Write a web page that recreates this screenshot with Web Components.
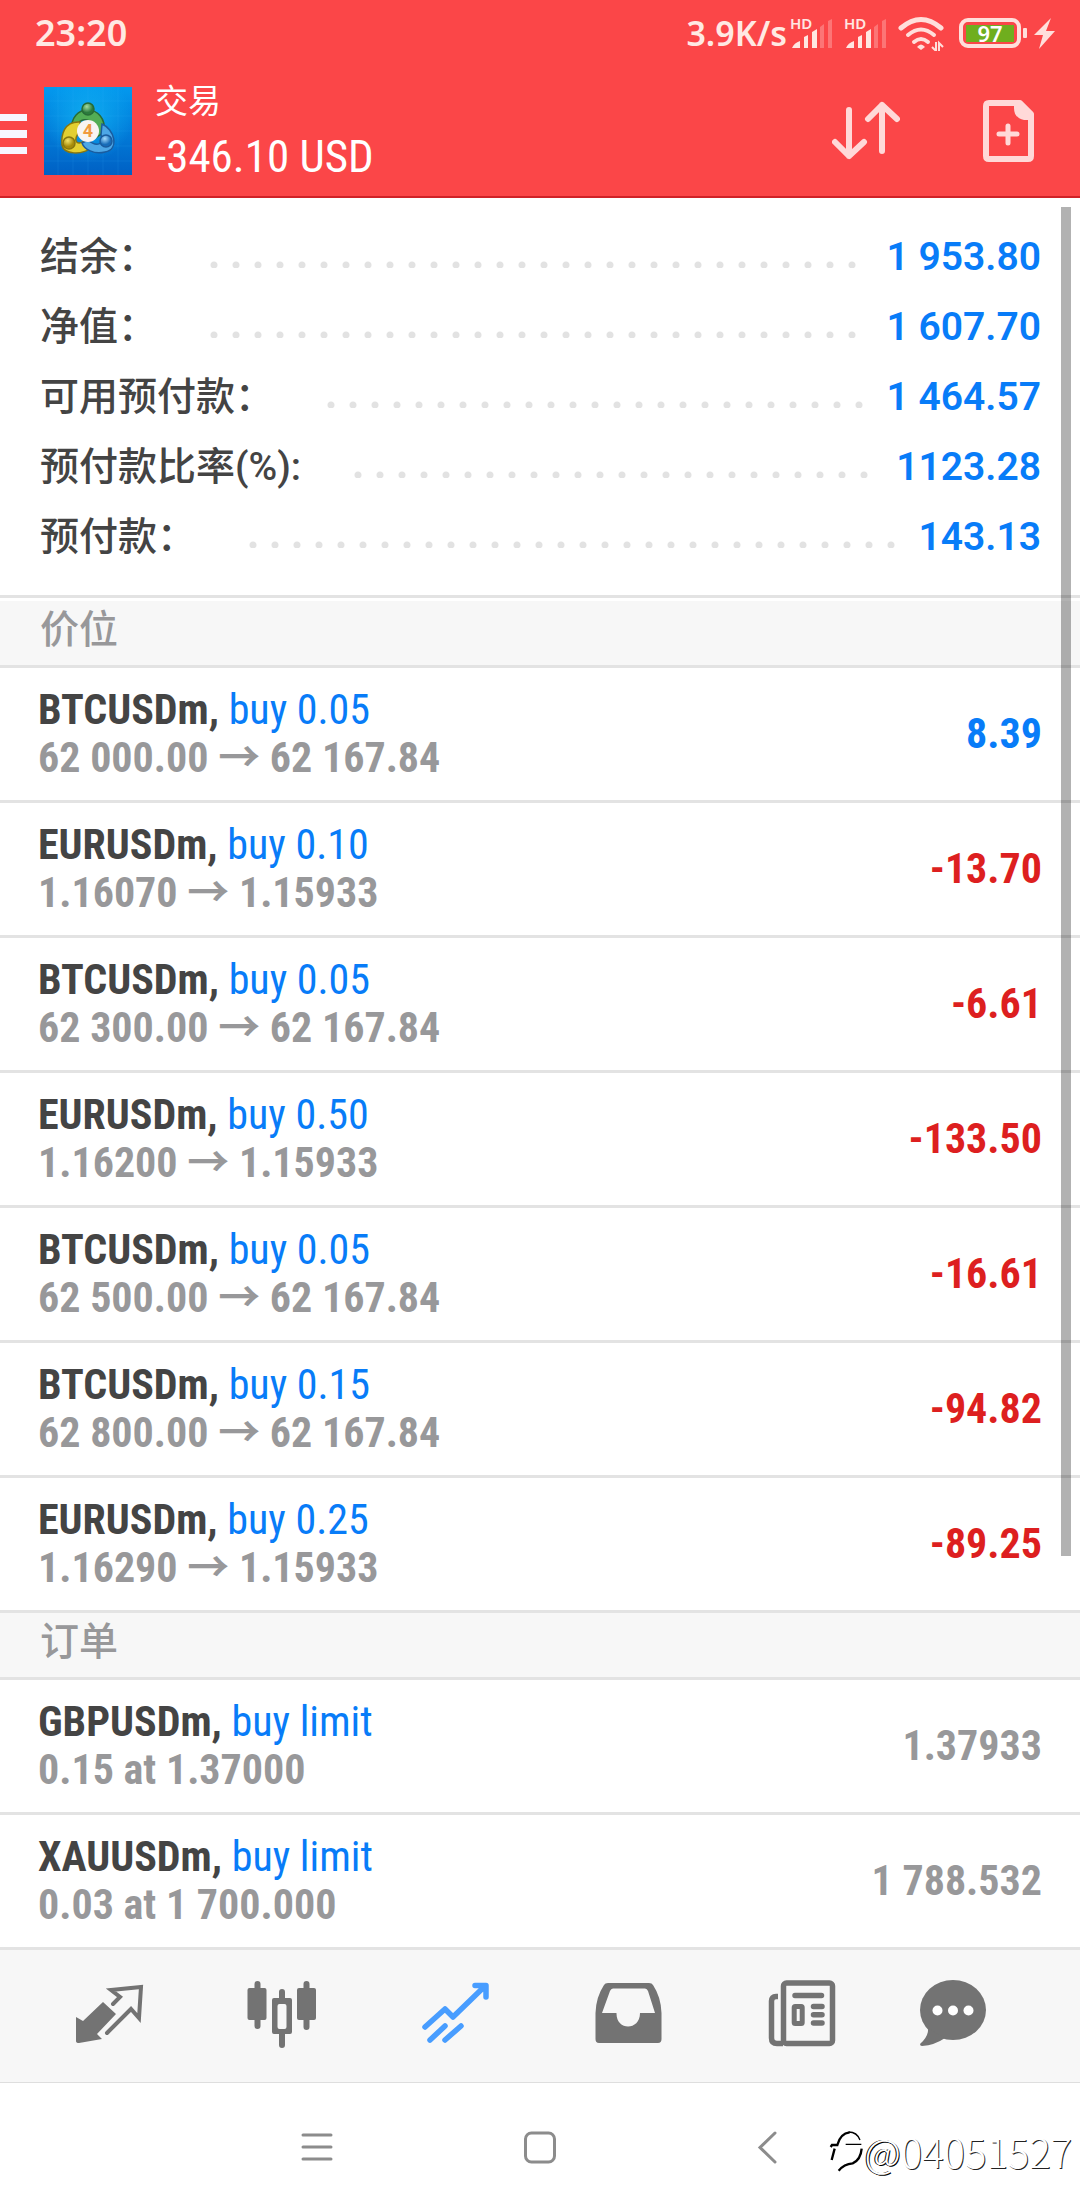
<!DOCTYPE html>
<html lang="zh-CN">
<head>
<meta charset="utf-8">
<meta name="viewport" content="width=device-width, initial-scale=1">
<title>交易</title>
<style>
  :root {
    --cond: "Roboto Condensed", "Liberation Sans Narrow", Roboto, "Noto Sans CJK SC", sans-serif;
    --ui: Roboto, "Noto Sans CJK SC", sans-serif;
    --cjk: "Noto Sans CJK SC", sans-serif;
    --status: "Noto Sans", "Noto Sans CJK SC", sans-serif;
    --red: #fb4648;
    --line: #e3e3e3;
    --bar: #f7f7f7;
    --ink: #444444;
    --grey: #98989a;
    --blue: #087cf8;
    --loss: #dd1f20;
  }
  body { margin: 0; background: #fff; font-family: var(--ui); color: var(--ink); }
</style>
</head>
<body>
<trade-app></trade-app>

<script>
const define = (name, html) => {
  const template = document.createElement('template');
  template.innerHTML = html;
  customElements.define(name, class extends HTMLElement {
    constructor() {
      super();
      this.attachShadow({ mode: 'open' }).append(template.content.cloneNode(true));
    }
  });
};

define('signal-bars', `
<style>
  :host { display: block; width: 44px; height: 48px; }
  svg { display: block; overflow: visible; }
  text { font: 600 15px var(--status); }
</style>
<svg width="44" height="48" fill="#ffe6e2">
  <text x="0" y="20">HD</text>
  <path d="M2 39 Q4 34 10 32 V39 Z M14 39 V28 L18 26 V39 Z M22 39 V23 L27 20 V39 Z"/>
  <path opacity=".3" d="M30 39 V18 L34 15 V39 Z M38 39 V12 L42 10 V39 Z"/>
</svg>`);

define('status-bar', `
<style>
  :host { display: flex; align-items: center; justify-content: space-between; height: 66px;
          padding: 0 25px 0 35px; box-sizing: border-box; font: 600 36px/66px var(--status); color: #ffe9e3; }
  .right { display: flex; align-items: center; gap: 10px; }
  .speed { font-size: 34px; margin-right: -7px; }
  svg { display: block; }
  .battery { margin-left: -3px; }
  svg text { font: 600 22px var(--status); }
</style>
<span>23:20</span>
<div class="right">
  <span class="speed">3.9K/s</span>
  <signal-bars></signal-bars>
  <signal-bars></signal-bars>
  <svg width="52" height="36" fill="none" stroke="#ffdfdb" stroke-width="5">
    <path d="M3 13 Q23 -4 43 13" stroke-linecap="round"/>
    <path d="M10 20 Q23 9 36 20" stroke-linecap="round" stroke-width="4"/>
    <path d="M16 27 Q23 21 30 27" stroke-linecap="round" stroke-width="4"/>
    <path d="M19 32 Q23 27 27 32 L23 35 Z" fill="#ffdfdb" stroke="none"/>
    <path d="M38 27 V36 L34 32 M41 36 V28 L45 32" stroke-width="2"/>
  </svg>
  <svg class="battery" width="98" height="36">
    <rect x="4" y="5" width="58" height="26" rx="7" fill="none" stroke="#ffdfdb" stroke-width="4"/>
    <rect x="9" y="10" width="48" height="17" fill="#6fae1e"/>
    <text x="33" y="27" text-anchor="middle" fill="#fff">97</text>
    <rect x="66" y="13" width="4" height="10" rx="1" fill="#ffdfdb"/>
    <path d="M94 3 L77 20 H86 L82 34 L98 16 H89 Z" fill="#ffdfdb"/>
  </svg>
</div>`);

define('app-logo', `
<style>:host { display: block; } svg { display: block; } text { font: 700 18px var(--ui); }</style>
<svg width="88" height="88" role="img" aria-label="MetaTrader 4">
  <defs>
    <linearGradient id="bg" x2="0" y2="1"><stop stop-color="#0399ee"/><stop offset="1" stop-color="#0060c4"/></linearGradient>
    <radialGradient id="gl" cy=".35"><stop stop-color="#12b4f4" stop-opacity=".8"/><stop offset="1" stop-color="#12b4f4" stop-opacity="0"/></radialGradient>
    <radialGradient id="g" cx=".4" cy=".3"><stop stop-color="#a5dba0"/><stop offset="1" stop-color="#2b7b3d"/></radialGradient>
    <radialGradient id="y" cx=".4" cy=".3"><stop stop-color="#f5e56a"/><stop offset="1" stop-color="#a68a0b"/></radialGradient>
    <radialGradient id="b" cx=".4" cy=".3"><stop stop-color="#a4dcff"/><stop offset="1" stop-color="#176cb8"/></radialGradient>
  </defs>
  <rect width="88" height="88" fill="url(#bg)"/>
  <rect width="88" height="88" fill="url(#gl)"/>
  <path d="M14 0V88M29 0V88M44 0V88M59 0V88M74 0V88M0 14H88M0 29H88M0 44H88M0 59H88M0 74H88" stroke="#4ec0ff" stroke-opacity=".12"/>
  <g stroke-width="1.5">
    <path d="M28 44 C24 16 64 16 60 45 L53 50 C55 34 36 26 33 40 Z" fill="#53ad55" stroke="#286b36"/>
    <path d="M36 35 C20 34 17 48 18 58 C20 68 38 68 47 61 L40 54 C33 59 28 54 36 44 Z" fill="#e3cf31" stroke="#88760f"/>
    <path d="M58 37 C70 42 76 62 61 65 C50 68 40 62 38 56 L44 53 C52 60 61 58 57 48 Z" fill="#4da7e6" stroke="#1a5c9f"/>
    <circle cx="44" cy="22" r="6" fill="url(#g)" stroke="#286b36"/>
    <circle cx="25" cy="56" r="6" fill="url(#y)" stroke="#88760f"/>
    <circle cx="62" cy="54" r="6" fill="url(#b)" stroke="#1a5c9f"/>
  </g>
  <circle cx="44" cy="44" r="11" fill="#f8f4f2"/>
  <text x="44" y="50" text-anchor="middle" fill="#f09a3e">4</text>
</svg>`);

define('app-header', `
<style>
  :host { display: block; background: var(--red); color: #fff; border-bottom: 2px solid #cf2228; }
  .row { display: flex; align-items: center; height: 130px; padding-right: 46px; }
  button { all: unset; display: block; cursor: pointer; }
  svg { display: block; }
  .menu { padding-top: 6px; }
  app-logo { margin: 0 23px 0 17px; }
  .titles { flex: 1; display: flex; flex-direction: column; gap: 6px; padding-bottom: 2px; }
  h1 { margin: 0; font: 400 33px/48px var(--cjk); }
  p { margin: 0; font: 400 45px/56px var(--cond); }
  .actions { display: flex; gap: 83px; align-items: center; }
</style>
<status-bar></status-bar>
<div class="row">
  <button class="menu" aria-label="菜单"><svg width="27" height="40" fill="#f7f6ff"><path d="M0 0H27V7H0ZM0 16H27V24H0ZM0 33H27V40H0Z"/></svg></button>
  <app-logo></app-logo>
  <div class="titles"><h1>交易</h1><p>-346.10 USD</p></div>
  <div class="actions">
    <button aria-label="排序"><svg width="68" height="62" fill="none" stroke="#ffd9d8" stroke-width="6" stroke-linecap="round" stroke-linejoin="round"><path d="M17 10V56M3 42L17 56L32 42M50 51V5M36 19L50 5L65 19"/></svg></button>
    <button aria-label="新订单"><svg width="51" height="62" fill="none" stroke="#ffd9d8" stroke-width="6" stroke-linecap="round" stroke-linejoin="round"><path d="M6 3H37L48 14V56Q48 59 45 59H6Q3 59 3 56V6Q3 3 6 3Z"/><path d="M31 3H38L49 14V20H41Q31 18 31 8Z" fill="#ffd9d8" stroke="none"/><path d="M25 26V43M16 34H34" stroke-width="5"/></svg></button>
  </div>
</div>`);

define('summary-row', `
<style>
  :host { display: flex; align-items: center; height: 70px; font: 500 39px/70px var(--ui); white-space: nowrap; }
  .label { color: var(--ink); }
  .dots { flex: 1; height: 7px; margin: 14px 22px 0 53px;
          background: radial-gradient(circle at 4px 4px, #e2e2e2 3px, transparent 4px) 0 0 / 22px 7px repeat-x; }
  .value { color: var(--blue); font-weight: 600; }
</style>
<span class="label"><slot name="label"></slot></span><span class="dots"></span><span class="value"><slot></slot></span>`);

define('section-title', `
<style>
  :host { display: block; background: var(--bar); border-bottom: 3px solid var(--line); }
  h2 { margin: 0; padding: 0 40px; height: 64px; font: 500 39px/50px var(--cjk); color: var(--grey); }
</style>
<h2><slot></slot></h2>`);

define('trade-row', `
<style>
  :host { display: flex; align-items: center; justify-content: space-between; height: 132px;
          padding: 0 38px; border-bottom: 3px solid var(--line); font: 700 42px/48px var(--cond);
          color: var(--grey); white-space: nowrap; }
  .symbol { color: var(--ink); }
  .side { color: var(--blue); font-weight: 400; }
  :host([tone="profit"]) .value { color: var(--blue); }
  :host([tone="loss"]) .value { color: var(--loss); }
</style>
<div>
  <div><span class="symbol"><slot name="symbol"></slot>,</span> <span class="side"><slot name="side"></slot></span></div>
  <div><slot name="detail"></slot></div>
</div>
<div class="value"><slot></slot></div>`);

define('tab-bar', `
<style>
  :host { display: block; background: var(--bar); border-bottom: 1px solid #dedede; }
  nav { display: flex; height: 132px; padding: 0 62px 0 22px; align-items: center; }
  button { all: unset; flex: 173; display: flex; justify-content: center; cursor: pointer; color: #737373; }
  button:last-child { flex: 131; }
  button[aria-current] { color: #489dff; }
  svg { display: block; }
  .s { fill: none; stroke: currentColor; stroke-width: 5.5; stroke-linecap: round; stroke-linejoin: round; }
  .f { fill: currentColor; }
</style>
<nav>
  <button aria-label="行情"><svg width="80" height="80"><path class="f" d="M7 41L14 45L34 26L47 38L28 58L33 63L10 67Q7 67 7 65Z"/><path class="s" style="stroke-width:4;stroke-linejoin:miter" d="M44 28L51 21L42 14L72 11L70 42L62 33L38 57"/></svg></button>
  <button aria-label="图表"><svg width="80" height="80"><path class="s" style="stroke-width:6" d="M15.5 8V50M64.5 8V51M40 16V22M40 58V69"/><rect class="f" x="5.5" y="12" width="19" height="32" rx="2"/><rect class="f" x="55" y="12" width="19" height="32" rx="2"/><path class="f" fill-rule="evenodd" d="M32 22H48Q50 22 50 24V56Q50 58 48 58H32Q30 58 30 56V24Q30 22 32 22ZM37.5 28Q35.5 28 35.5 30V51Q35.5 53 37.5 53H42.5Q44.5 53 44.5 51V30Q44.5 28 42.5 28Z"/></svg></button>
  <button aria-label="交易" aria-current="page"><svg width="80" height="80"><path class="s" d="M10 51L30 33L38 41L69 11M60 9.5H71V21M30 50L15 64M46 50L30 64"/></svg></button>
  <button aria-label="历史"><svg width="80" height="80"><path class="f" fill-rule="evenodd" d="M20 7H61Q64 7 65 9Q73 21 73.5 37V63Q73.5 67 70 67H11Q7.5 67 7.5 63V37Q8 21 16 9Q17 7 20 7ZM25 12.5Q23 12.5 22 15L14 37H28.5C28 55 52 55 52 37H67L60 15Q59 12.5 57 12.5Z"/></svg></button>
  <button aria-label="新闻"><svg width="80" height="80"><rect class="s" x="22.5" y="7" width="49" height="60.5" rx="3"/><path class="s" style="stroke-linecap:butt" d="M17 20.500H15Q10.5 20.500 10.5 25V62Q10.5 67.5 16 67.5H22"/><path class="s" d="M34 19.5H60.5M52.5 30.5H61M52.5 38.7H61M52.5 47H61"/><rect class="s" x="33.2" y="30.5" width="8" height="17" rx="1" style="stroke-width:5"/></svg></button>
  <button aria-label="消息"><svg width="80" height="80"><ellipse class="f" cx="40" cy="34" rx="33" ry="30"/><path class="f" d="M15 52Q16 60 7 68Q7 70 9 70Q22 69 32 62Z"/><g fill="#fff"><circle cx="24.5" cy="34.5" r="5"/><circle cx="40" cy="34.5" r="5"/><circle cx="55.5" cy="34.5" r="5"/></g></svg></button>
</nav>`);

define('system-nav', `
<style>
  :host { display: flex; align-items: center; justify-content: center; gap: 159px; height: 129px; background: #fff; position: relative; }
  button { all: unset; display: block; cursor: pointer; }
  svg { display: block; }
  .mark { position: absolute; right: 8px; bottom: 32px; display: flex; align-items: center; gap: 1px;
          font: 300 40px/58px var(--cjk); color: #fff; text-shadow: 1px 1px 0 #222; }
  .at { text-shadow: 1px 1px 0 #000, -1px 0 0 #000; }
</style>
<button aria-label="最近任务"><svg width="64" height="64" stroke="#8c8c8c" stroke-width="3" stroke-linecap="round"><path d="M18 19H46M18 31H46M18 43H46"/></svg></button>
<button aria-label="主页"><svg width="64" height="64" fill="none" stroke="#8c8c8c" stroke-width="3"><rect x="17.5" y="17" width="29" height="29" rx="6"/></svg></button>
<button aria-label="返回"><svg width="64" height="64" fill="none" stroke="#8c8c8c" stroke-width="3" stroke-linecap="round"><path d="M44 17L29 31.5L44 46"/></svg></button>
<div class="mark">
  <svg width="34" height="44" viewBox="63 45 102 132" fill="none" stroke="#000"><path d="M68 99L72 93H88Q97 58 125 55" stroke-width="7"/><path d="M122 54Q147 54 156 78M113 91H160" stroke-width="4"/><path d="M80 104L71 138M161 104Q158 138 134 148Q108 150 92 170" stroke-width="7"/></svg>
  <span><span class="at">@</span>04051527</span>
</div>`);

define('trade-app', `
<style>
  :host { display: block; }
  main { position: relative; }
  .summary { padding: 24px 39px 23px 40px; border-bottom: 3px solid var(--line); margin-bottom: 3px; }
  .thumb { position: absolute; top: 9px; right: 9px; width: 10px; bottom: 394px; background: rgba(0,0,0,.3); }
</style>
<app-header></app-header>
<main>
  <section class="summary">
    <summary-row><span slot="label">结余：</span>1 953.80</summary-row>
    <summary-row><span slot="label">净值：</span>1 607.70</summary-row>
    <summary-row><span slot="label">可用预付款：</span>1 464.57</summary-row>
    <summary-row><span slot="label">预付款比率(%):</span>1123.28</summary-row>
    <summary-row><span slot="label">预付款：</span>143.13</summary-row>
  </section>
  <section>
    <section-title>价位</section-title>
    <trade-row tone="profit"><span slot="symbol">BTCUSDm</span><span slot="side">buy 0.05</span><span slot="detail">62 000.00 → 62 167.84</span>8.39</trade-row>
    <trade-row tone="loss"><span slot="symbol">EURUSDm</span><span slot="side">buy 0.10</span><span slot="detail">1.16070 → 1.15933</span>-13.70</trade-row>
    <trade-row tone="loss"><span slot="symbol">BTCUSDm</span><span slot="side">buy 0.05</span><span slot="detail">62 300.00 → 62 167.84</span>-6.61</trade-row>
    <trade-row tone="loss"><span slot="symbol">EURUSDm</span><span slot="side">buy 0.50</span><span slot="detail">1.16200 → 1.15933</span>-133.50</trade-row>
    <trade-row tone="loss"><span slot="symbol">BTCUSDm</span><span slot="side">buy 0.05</span><span slot="detail">62 500.00 → 62 167.84</span>-16.61</trade-row>
    <trade-row tone="loss"><span slot="symbol">BTCUSDm</span><span slot="side">buy 0.15</span><span slot="detail">62 800.00 → 62 167.84</span>-94.82</trade-row>
    <trade-row tone="loss"><span slot="symbol">EURUSDm</span><span slot="side">buy 0.25</span><span slot="detail">1.16290 → 1.15933</span>-89.25</trade-row>
  </section>
  <section>
    <section-title>订单</section-title>
    <trade-row><span slot="symbol">GBPUSDm</span><span slot="side">buy limit</span><span slot="detail">0.15 at 1.37000</span>1.37933</trade-row>
    <trade-row><span slot="symbol">XAUUSDm</span><span slot="side">buy limit</span><span slot="detail">0.03 at 1 700.000</span>1 788.532</trade-row>
  </section>
  <div class="thumb"></div>
</main>
<tab-bar></tab-bar>
<system-nav></system-nav>`);
</script>
</body>
</html>
